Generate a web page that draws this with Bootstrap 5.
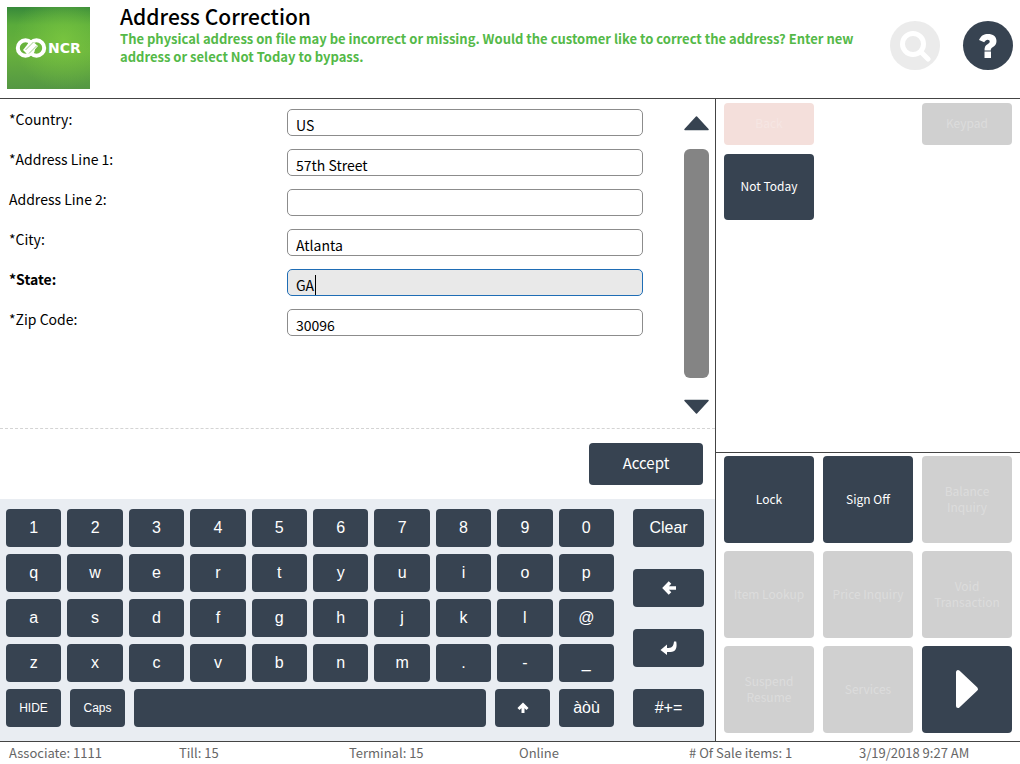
<!DOCTYPE html>
<html lang="en">
<head>
<meta charset="utf-8">
<meta name="viewport" content="width=device-width, initial-scale=1">
<title>Address Correction</title>
<link href="https://cdn.jsdelivr.net/npm/bootstrap@5.3.0/dist/css/bootstrap.min.css" rel="stylesheet">
<style>
  :root { --ink: #374351; --rule: #444; --off: #d0d0d0; }
  body { font-family: "Noto Sans CJK SC", sans-serif; font-size: 14px; line-height: 20px; color: #000; background: #fff; }
  .topbar { height: 99px; border-bottom: 1px solid var(--rule); padding: 7px 7px 0; }
  .brand-tile { width: 83px; height: 82px; margin-right: 30px; }
  .page-title { font-size: 21px; line-height: 24px; font-weight: 500; margin: -3px 0 2px; }
  .notice { color: #54b948; font-weight: 700; line-height: 18px; font-size: 13px; max-width: 750px; }
  .top-tools { gap: 23px; padding-top: 14px; }
  .round-btn { width: 50px; height: 49px; padding: 0; border: 0; border-radius: 50%; background: var(--ink); }
  .round-btn:disabled { background: #ebebeb; }
  .fields { padding: 10px 41px 0 9px; }
  .field-row { display: grid; grid-template-columns: 278px 1fr; height: 27px; margin-bottom: 13px; }
  .field-row .form-control { height: 27px; border: 1px solid #8c8c8c; border-radius: 5px; padding: 5px 8px 0; font-size: 14px; line-height: 20px; color: #000; box-shadow: none; }
  .field-row .form-control.current { background: #e9e9e9; border-color: #1f6db5; }
  .caret-wrap::after { content: ""; position: absolute; left: 28px; top: 6px; width: 1px; height: 20px; background: #000; }
  .scroller { width: 25px; margin: 17px 6px 14px 0; }
  .scroller button { border: 0; background: none; padding: 0; width: 25px; height: 15px; display: block; }
  .scroller svg, .round-btn svg, .act svg, .key svg { display: block; margin: auto; }
  .thumb { background: #848484; border-radius: 6px; margin: 18px 0 21px; }
  .accept-bar { border-top: 1px dashed #d4d4d4; padding: 14px 12px; }
  .accept-btn { width: 114px; height: 42px; font-size: 15px; }
  .act { background: var(--ink); color: #fff; border: 0; border-radius: 4px; padding: 0 0 2px; }
  .act:disabled { background: var(--off); color: #dcdcdc; }
  .act.back:disabled { background: #f4dfdb; color: #f6e6e3; }
  .side { width: 305px; border-left: 1px solid var(--rule); }
  .side-grid { display: grid; grid-template-columns: repeat(3, 1fr); column-gap: 9px; padding: 4px 8px; }
  .side-grid .act { font-size: 12px; line-height: 16px; }
  .side-top { grid-template-rows: 42px 66px; row-gap: 9px; align-content: start; }
  .side-bottom { grid-auto-rows: 87px; row-gap: 8px; border-top: 1px solid var(--rule); padding: 3px 8px 8px; }
  .keyboard { background: #e9edf2; padding: 10px 11px 14px 6px; gap: 19px; }
  .key { font-family: "Liberation Sans", Arial, sans-serif; font-size: 16px; line-height: 20px; background: var(--ink); color: #fff; border: 0; border-radius: 4px; height: 38px; padding: 0; }
  .key-grid { display: grid; grid-template-columns: repeat(10, 1fr); gap: 7px 6px; margin-bottom: 7px; }
  .key-last { gap: 9px; }
  .key-last .key { width: 55px; }
  .key-last .space { flex: 1; }
  .key.word { font-size: 12px; }
  .key-side { width: 71px; }
  .status { border-top: 1px solid var(--rule); height: 23px; font-size: 13px; line-height: 22px; color: #666; white-space: nowrap; }
  .status div { padding-left: 9px; }
</style>
</head>
<body>
<div class="d-flex flex-column min-vh-100">
  <header class="topbar d-flex align-items-start">
    <svg class="brand-tile flex-shrink-0" viewBox="0 0 83 82" role="img" aria-label="NCR">
      <defs>
        <linearGradient id="base" x1="0" y1="0" x2="0" y2="1"><stop offset="0" stop-color="#37893a"/><stop offset=".22" stop-color="#5aab3b"/><stop offset=".55" stop-color="#68b13d"/><stop offset="1" stop-color="#549743"/></linearGradient>
        <radialGradient id="glow" cx=".68" cy=".4" r=".6"><stop offset="0" stop-color="#80cc40" stop-opacity=".7"/><stop offset="1" stop-color="#80cc40" stop-opacity="0"/></radialGradient>
      </defs>
      <rect width="83" height="82" fill="url(#base)"/><rect width="83" height="82" fill="url(#glow)"/>
      <g fill="none" stroke="#fff" stroke-width="4"><circle cx="18.500" cy="41" r="7.700"/><circle cx="29.500" cy="41" r="7.700"/></g>
      <path d="M24 33l7 6-9 10-6-6z" fill="#fff"/>
      <path d="M18.500 43l8-8M22 46.500l8-8" stroke="#9fce8a" stroke-width="1"/>
      <text x="41" y="46" fill="#fff" font-family="DejaVu Sans, sans-serif" font-weight="700" font-size="14">NCR</text>
    </svg>
    <div class="flex-grow-1">
      <h1 class="page-title">Address Correction</h1>
      <p class="notice mb-0">The physical address on file may be incorrect or missing. Would the customer like to correct the address? Enter new address or select Not Today to bypass.</p>
    </div>
    <div class="top-tools d-flex flex-shrink-0">
      <button class="round-btn" disabled aria-label="Search"><svg width="32" height="32" viewBox="0 0 32 32" fill="none" stroke="#fff" stroke-width="5" stroke-linecap="round"><circle cx="14" cy="14" r="10.500"/><path d="M22 22l7 7"/></svg></button>
      <button class="round-btn" aria-label="Help"><svg width="20" height="26" viewBox="0 0 20 26" fill="#fff"><path d="M1 7C3 2.500 6 1 10 1c5 0 8.500 2.600 8.500 7 0 3-1.500 4.800-3.500 6-1.700 1.200-2.200 1.700-2.200 3.500H6.500c0-3.500.8-5 3-6.300 1.500-1 2.200-1.500 2.200-2.700 0-1-.8-1.700-2-1.700-1.500 0-2.400.9-3.500 2.500z"/><path d="M6.500 18.500h6.500V25H6.500z"/></svg></button>
    </div>
  </header>

  <main class="d-flex flex-grow-1">
    <section class="d-flex flex-column flex-grow-1">
      <div class="d-flex flex-grow-1">
        <form class="fields flex-grow-1">
          <div class="field-row"><label for="country">*Country:</label><input class="form-control" id="country" value="US"></div>
          <div class="field-row"><label for="line1">*Address Line 1:</label><input class="form-control" id="line1" value="57th Street"></div>
          <div class="field-row"><label for="line2">Address Line 2:</label><input class="form-control" id="line2"></div>
          <div class="field-row"><label for="city">*City:</label><input class="form-control" id="city" value="Atlanta"></div>
          <div class="field-row"><label for="state" class="fw-bold">*State:</label><div class="caret-wrap position-relative"><input class="form-control current" id="state" value="GA"></div></div>
          <div class="field-row"><label for="zip">*Zip Code:</label><input class="form-control" id="zip" value="30096"></div>
        </form>
        <div class="scroller d-flex flex-column flex-shrink-0">
          <button aria-label="Scroll up"><svg width="25" height="15" viewBox="0 0 25 15"><path d="M12.500 1L24 13.500H1z" fill="#374351" stroke="#374351" stroke-width="1.500" stroke-linejoin="round"/></svg></button>
          <div class="thumb flex-grow-1"></div>
          <button aria-label="Scroll down"><svg width="25" height="15" viewBox="0 0 25 15"><path d="M12.500 14L24 1.500H1z" fill="#374351" stroke="#374351" stroke-width="1.500" stroke-linejoin="round"/></svg></button>
        </div>
      </div>
      <div class="accept-bar d-flex justify-content-end"><button class="act accept-btn">Accept</button></div>
      <div class="keyboard d-flex">
        <div class="flex-grow-1">
          <div class="key-grid">
            <button class="key">1</button><button class="key">2</button><button class="key">3</button><button class="key">4</button><button class="key">5</button><button class="key">6</button><button class="key">7</button><button class="key">8</button><button class="key">9</button><button class="key">0</button>
            <button class="key">q</button><button class="key">w</button><button class="key">e</button><button class="key">r</button><button class="key">t</button><button class="key">y</button><button class="key">u</button><button class="key">i</button><button class="key">o</button><button class="key">p</button>
            <button class="key">a</button><button class="key">s</button><button class="key">d</button><button class="key">f</button><button class="key">g</button><button class="key">h</button><button class="key">j</button><button class="key">k</button><button class="key">l</button><button class="key">@</button>
            <button class="key">z</button><button class="key">x</button><button class="key">c</button><button class="key">v</button><button class="key">b</button><button class="key">n</button><button class="key">m</button><button class="key">.</button><button class="key">-</button><button class="key">_</button>
          </div>
          <div class="key-last d-flex">
            <button class="key word">HIDE</button><button class="key word">Caps</button><button class="key space" aria-label="Space"></button>
            <button class="key" aria-label="Shift"><svg width="12" height="12" viewBox="0 0 12 12" fill="none" stroke="#fff" stroke-width="3"><path d="M1.500 7L6 2.500 10.500 7M6 3v8"/></svg></button>
            <button class="key">àòù</button>
          </div>
        </div>
        <div class="key-side d-flex flex-column justify-content-between flex-shrink-0">
          <button class="key">Clear</button>
          <button class="key" aria-label="Backspace"><svg width="14" height="14" viewBox="0 0 14 14" fill="none" stroke="#fff" stroke-width="3.600"><path d="M8 1.500L2.700 7 8 12.500M3 7h11"/></svg></button>
          <button class="key" aria-label="Enter"><svg width="18" height="14" viewBox="0 0 18 14" fill="#fff"><path d="M.5 9L7 3.500V7c4.500 0 6.500-1 7-6.500h2.200c1.300 6.500-.7 10.500-5.700 10.500H7v3z"/></svg></button>
          <button class="key">#+=</button>
        </div>
      </div>
    </section>

    <aside class="side d-flex flex-column flex-shrink-0">
      <div class="side-grid side-top flex-grow-1">
        <button class="act back" disabled>Back</button><span></span><button class="act" disabled>Keypad</button>
        <button class="act">Not Today</button>
      </div>
      <div class="side-grid side-bottom">
        <button class="act">Lock</button><button class="act">Sign Off</button><button class="act" disabled>Balance<br>Inquiry</button>
        <button class="act" disabled>Item Lookup</button><button class="act" disabled>Price Inquiry</button><button class="act" disabled>Void<br>Transaction</button>
        <button class="act" disabled>Suspend<br>Resume</button><button class="act" disabled>Services</button>
        <button class="act" aria-label="More"><svg width="24" height="40" viewBox="0 0 24 40"><path d="M3 3v34l18-17z" fill="#fff" stroke="#fff" stroke-width="4" stroke-linejoin="round"/></svg></button>
      </div>
    </aside>
  </main>

  <footer class="status row g-0">
    <div class="col">Associate: 1111</div><div class="col">Till: 15</div><div class="col">Terminal: 15</div><div class="col">Online</div><div class="col"># Of Sale items: 1</div><div class="col">3/19/2018 9:27 AM</div>
  </footer>
</div>
<script src="https://cdn.jsdelivr.net/npm/bootstrap@5.3.0/dist/js/bootstrap.bundle.min.js"></script>
</body>
</html>
